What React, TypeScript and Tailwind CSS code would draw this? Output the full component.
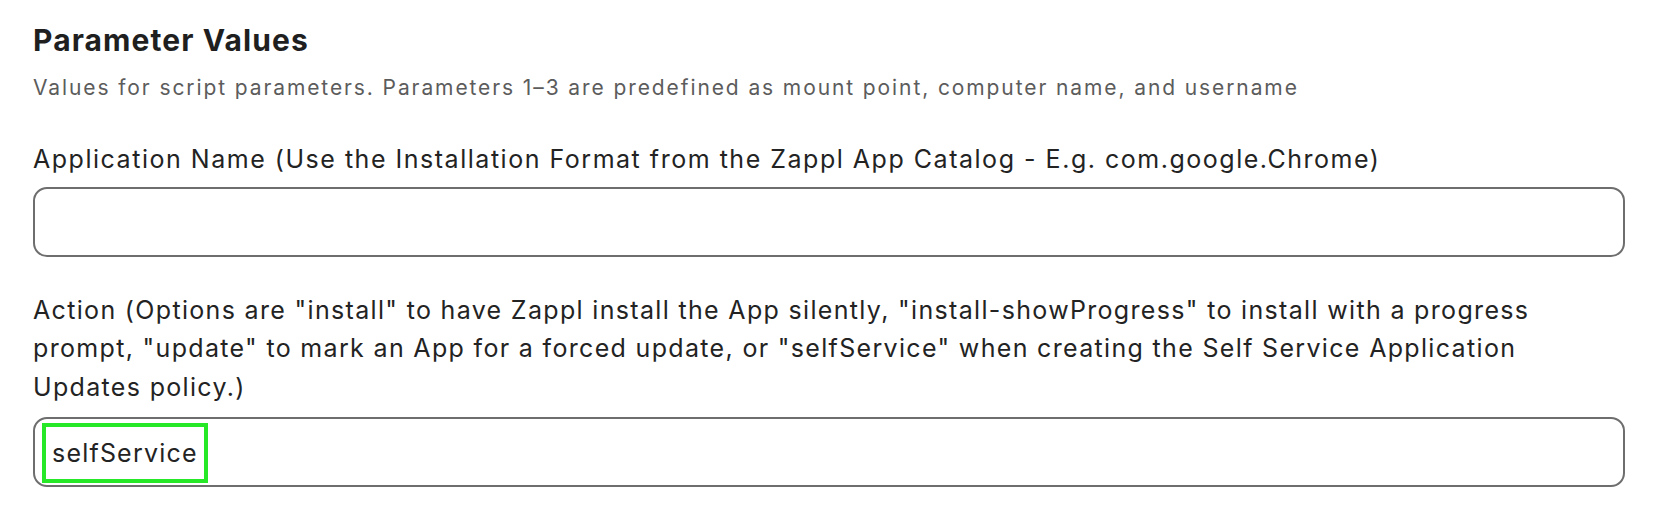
export default function App() {
  return (
    <div className="min-h-[520px] w-full bg-white pl-[33px] pr-[29px] pt-[22px] font-['Inter',sans-serif] text-[#232323]">
      <h2 className="text-[30px] font-bold leading-[36px] tracking-[1.1px] text-[#1f1f1f]">Parameter Values</h2>
      <p className="mt-[15px] text-[21px] leading-[30px] tracking-[1.9px] text-[#5c5c5c]">
        Values for script parameters. Parameters 1–3 are predefined as mount point, computer name, and username
      </p>

      <label className="mt-[37px] block text-[25px] leading-[38.5px] tracking-[1.52px]">
        Application Name (Use the Installation Format from the Zappl App Catalog - E.g. com.google.Chrome)
      </label>
      <div className="mt-[8px] h-[70px] rounded-[14px] border-2 border-[#6e6e6e]" />

      <label className="mt-[34px] block text-[25px] leading-[38.5px] tracking-[1.33px]">
        Action (Options are "install" to have Zappl install the App silently, "install-showProgress" to install with a progress
        prompt, "update" to mark an App for a forced update, or "selfService" when creating the Self Service Application
        Updates policy.)
      </label>
      <div className="mt-[11px] flex h-[70px] items-center rounded-[14px] border-2 border-[#6e6e6e] pl-[7px]">
        <span className="mt-[2px] border-[4px] border-[#27e827] px-[6px] py-[7px] text-[25px] leading-[38.5px] tracking-[1.2px]">selfService</span>
      </div>
    </div>
  );
}
